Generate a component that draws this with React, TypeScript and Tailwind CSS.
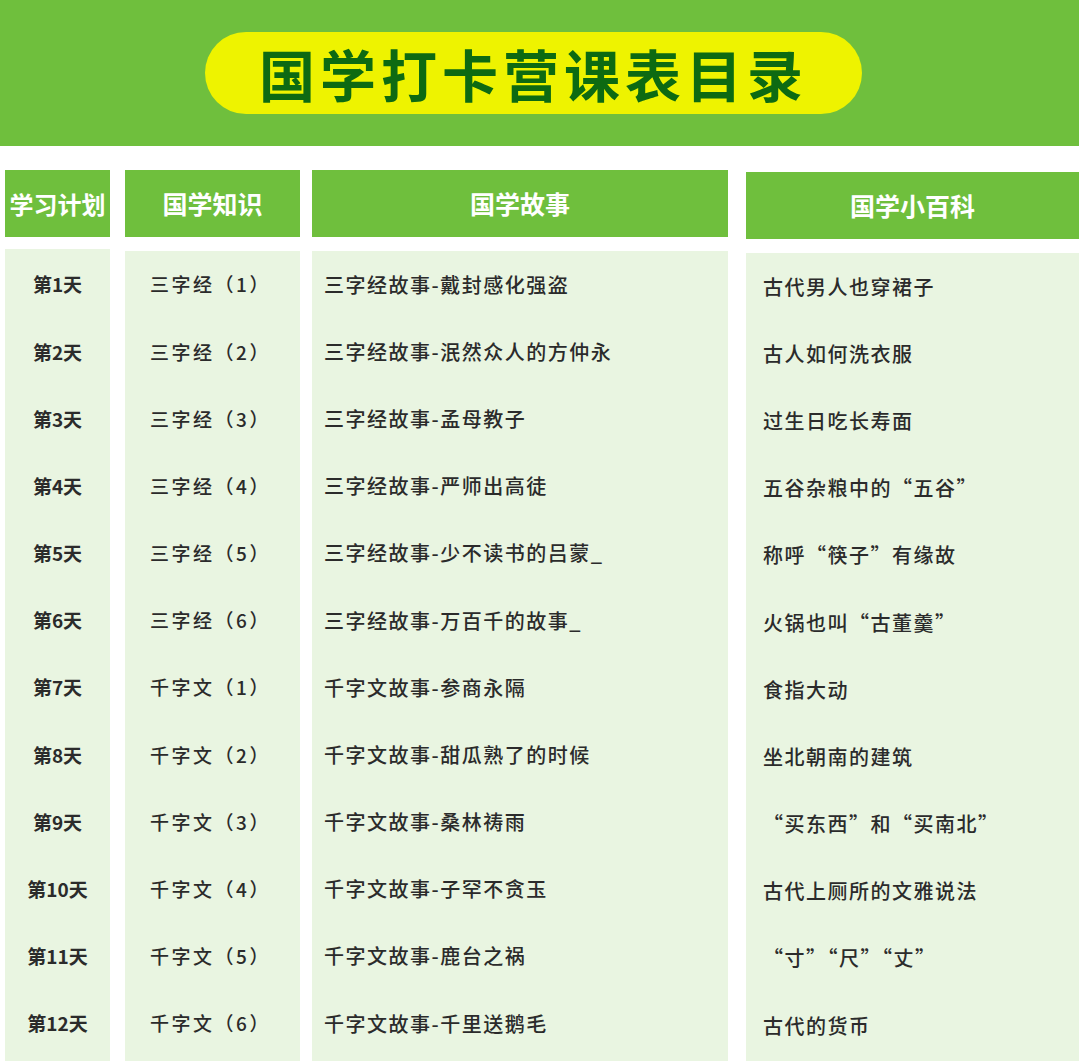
import React from "react";

const rows: [string, string, string, string][] = [
  ["第1天", "三字经（1）", "三字经故事-戴封感化强盗", "古代男人也穿裙子"],
  ["第2天", "三字经（2）", "三字经故事-泯然众人的方仲永", "古人如何洗衣服"],
  ["第3天", "三字经（3）", "三字经故事-孟母教子", "过生日吃长寿面"],
  ["第4天", "三字经（4）", "三字经故事-严师出高徒", "五谷杂粮中的“五谷”"],
  ["第5天", "三字经（5）", "三字经故事-少不读书的吕蒙_", "称呼“筷子”有缘故"],
  ["第6天", "三字经（6）", "三字经故事-万百千的故事_", "火锅也叫“古董羹”"],
  ["第7天", "千字文（1）", "千字文故事-参商永隔", "食指大动"],
  ["第8天", "千字文（2）", "千字文故事-甜瓜熟了的时候", "坐北朝南的建筑"],
  ["第9天", "千字文（3）", "千字文故事-桑林祷雨", "“买东西”和“买南北”"],
  ["第10天", "千字文（4）", "千字文故事-子罕不贪玉", "古代上厕所的文雅说法"],
  ["第11天", "千字文（5）", "千字文故事-鹿台之祸", "“寸”“尺”“丈”"],
  ["第12天", "千字文（6）", "千字文故事-千里送鹅毛", "古代的货币"],
];

const font = { fontFamily: '"Noto Sans CJK SC", "Noto Sans", sans-serif' };

function Header({ label, className }: { label: string; className: string }) {
  return (
    <div
      className={`h-[67px] bg-[#6fbf3d] flex items-center justify-center text-white font-bold ${className}`}
    >
      {label}
    </div>
  );
}

export default function App() {
  return (
    <div lang="zh-CN" className="w-[1079px] h-[1061px] overflow-hidden bg-white" style={font}>
      <div className="h-[146px] bg-[#6fbf3d] pt-[32px] pl-[205px]">
        <div className="w-[657px] h-[82px] rounded-full bg-[#eef300] flex items-center justify-center">
          <span className="text-[56px] font-bold text-[#0d6a12] tracking-[5px] leading-none">
            国学打卡营课表目录
          </span>
        </div>
      </div>

      <div className="flex pl-[5px] pt-[24px]">
        <div className="w-[105px] flex flex-col">
          <Header label="学习计划" className="text-[24px]" />
          <div className="mt-[12px] bg-[#e9f5e1] h-[900px] pt-[2px]">
            {rows.map((r) => (
              <div key={r[0]} className="h-[67.2px] flex items-center justify-center text-[19px] font-bold text-[#2b2b2b]">
                {r[0]}
              </div>
            ))}
          </div>
        </div>

        <div className="w-[175px] ml-[15px] flex flex-col">
          <Header label="国学知识" className="text-[25px]" />
          <div className="mt-[14px] bg-[#e9f5e1] h-[900px]">
            {rows.map((r) => (
              <div key={r[0]} className="h-[67.2px] flex items-center justify-center text-[19px] font-medium tracking-[2.5px] text-[#2b2b2b] pr-[4px]">
                {r[1]}
              </div>
            ))}
          </div>
        </div>

        <div className="w-[416px] ml-[12px] flex flex-col">
          <Header label="国学故事" className="text-[25px]" />
          <div className="mt-[14px] bg-[#e9f5e1] h-[900px]">
            {rows.map((r) => (
              <div key={r[0]} className="h-[67.2px] flex items-center pl-[12px] text-[20px] font-medium tracking-[1.5px] text-[#2b2b2b]">
                {r[2]}
              </div>
            ))}
          </div>
        </div>

        <div className="w-[333px] ml-[18px] flex flex-col">
          <Header label="国学小百科" className="mt-[2px] text-[25px]" />
          <div className="mt-[14px] bg-[#e9f5e1] h-[900px]">
            {rows.map((r) => (
              <div key={r[0]} className="h-[67.2px] flex items-center pl-[17px] text-[20px] font-medium tracking-[1.5px] text-[#2b2b2b]">
                {r[3]}
              </div>
            ))}
          </div>
        </div>
      </div>
    </div>
  );
}
